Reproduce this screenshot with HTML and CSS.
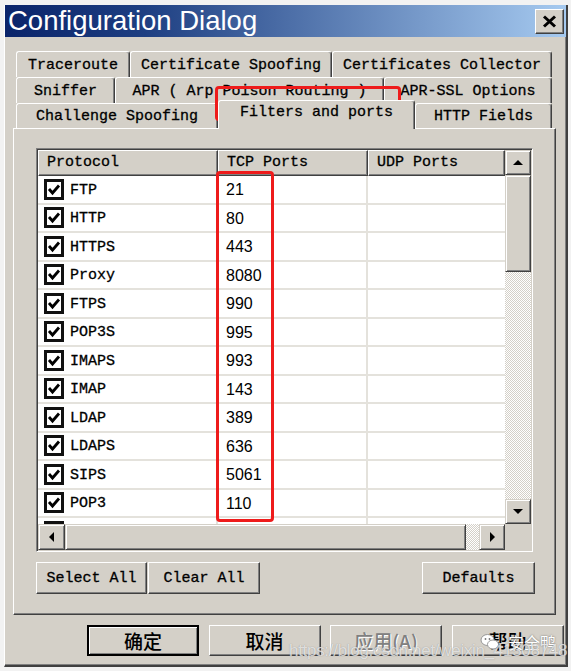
FILE: index.html
```html
<!DOCTYPE html>
<html>
<head>
<meta charset="utf-8">
<link rel="stylesheet" href="styles.css">
</head>
<body>
<div class="window">
  <div class="titlebar">
    <span class="title">Configuration Dialog</span>
    <div class="close"><svg width="15" height="13" viewBox="0 0 15 13"><path d="M2 1.5 L13 11.5 M13 1.5 L2 11.5" stroke="#000" stroke-width="3"/></svg></div>
  </div>
  <div class="content">
    <div class="tabctl">
      <div class="tabrows">
        <div class="tabrow r1">
          <div class="tab" style="width:114px">Traceroute</div>
          <div class="tab" style="width:202px">Certificate Spoofing</div>
          <div class="tab" style="width:220px">Certificates Collector</div>
        </div>
        <div class="tabrow r2">
          <div class="tab" style="width:99px">Sniffer</div>
          <div class="tab" style="width:269px">APR ( Arp Poison Routing )</div>
          <div class="tab" style="width:168px">APR-SSL Options</div>
        </div>
        <div class="tabrow r3">
          <div class="tab" style="width:202px">Challenge Spoofing</div>
          <div class="tab selected" style="width:197px">Filters and ports</div>
          <div class="tab" style="width:137px">HTTP Fields</div>
        </div>
      </div>
      <div class="panel">
        <div class="listview">
          <div class="lv-main">
            <div class="lv-head">
              <div class="hcell">Protocol</div>
              <div class="hcell">TCP Ports</div>
              <div class="hcell">UDP Ports</div>
            </div>
            <div class="lv-row"><div class="cell c1"><span class="cb"><svg width="14" height="13" viewBox="0 0 14 13"><path d="M2 6 L5.5 10 L12 2.5" fill="none" stroke="#000" stroke-width="2.8"/></svg></span>FTP</div><div class="cell c2">21</div><div class="cell c3"></div></div>
            <div class="lv-row"><div class="cell c1"><span class="cb"><svg width="14" height="13" viewBox="0 0 14 13"><path d="M2 6 L5.5 10 L12 2.5" fill="none" stroke="#000" stroke-width="2.8"/></svg></span>HTTP</div><div class="cell c2">80</div><div class="cell c3"></div></div>
            <div class="lv-row"><div class="cell c1"><span class="cb"><svg width="14" height="13" viewBox="0 0 14 13"><path d="M2 6 L5.5 10 L12 2.5" fill="none" stroke="#000" stroke-width="2.8"/></svg></span>HTTPS</div><div class="cell c2">443</div><div class="cell c3"></div></div>
            <div class="lv-row"><div class="cell c1"><span class="cb"><svg width="14" height="13" viewBox="0 0 14 13"><path d="M2 6 L5.5 10 L12 2.5" fill="none" stroke="#000" stroke-width="2.8"/></svg></span>Proxy</div><div class="cell c2">8080</div><div class="cell c3"></div></div>
            <div class="lv-row"><div class="cell c1"><span class="cb"><svg width="14" height="13" viewBox="0 0 14 13"><path d="M2 6 L5.5 10 L12 2.5" fill="none" stroke="#000" stroke-width="2.8"/></svg></span>FTPS</div><div class="cell c2">990</div><div class="cell c3"></div></div>
            <div class="lv-row"><div class="cell c1"><span class="cb"><svg width="14" height="13" viewBox="0 0 14 13"><path d="M2 6 L5.5 10 L12 2.5" fill="none" stroke="#000" stroke-width="2.8"/></svg></span>POP3S</div><div class="cell c2">995</div><div class="cell c3"></div></div>
            <div class="lv-row"><div class="cell c1"><span class="cb"><svg width="14" height="13" viewBox="0 0 14 13"><path d="M2 6 L5.5 10 L12 2.5" fill="none" stroke="#000" stroke-width="2.8"/></svg></span>IMAPS</div><div class="cell c2">993</div><div class="cell c3"></div></div>
            <div class="lv-row"><div class="cell c1"><span class="cb"><svg width="14" height="13" viewBox="0 0 14 13"><path d="M2 6 L5.5 10 L12 2.5" fill="none" stroke="#000" stroke-width="2.8"/></svg></span>IMAP</div><div class="cell c2">143</div><div class="cell c3"></div></div>
            <div class="lv-row"><div class="cell c1"><span class="cb"><svg width="14" height="13" viewBox="0 0 14 13"><path d="M2 6 L5.5 10 L12 2.5" fill="none" stroke="#000" stroke-width="2.8"/></svg></span>LDAP</div><div class="cell c2">389</div><div class="cell c3"></div></div>
            <div class="lv-row"><div class="cell c1"><span class="cb"><svg width="14" height="13" viewBox="0 0 14 13"><path d="M2 6 L5.5 10 L12 2.5" fill="none" stroke="#000" stroke-width="2.8"/></svg></span>LDAPS</div><div class="cell c2">636</div><div class="cell c3"></div></div>
            <div class="lv-row"><div class="cell c1"><span class="cb"><svg width="14" height="13" viewBox="0 0 14 13"><path d="M2 6 L5.5 10 L12 2.5" fill="none" stroke="#000" stroke-width="2.8"/></svg></span>SIPS</div><div class="cell c2">5061</div><div class="cell c3"></div></div>
            <div class="lv-row"><div class="cell c1"><span class="cb"><svg width="14" height="13" viewBox="0 0 14 13"><path d="M2 6 L5.5 10 L12 2.5" fill="none" stroke="#000" stroke-width="2.8"/></svg></span>POP3</div><div class="cell c2">110</div><div class="cell c3"></div></div>
            <div class="lv-row"><div class="cell c1"><span class="cb"><svg width="14" height="13" viewBox="0 0 14 13"><path d="M2 6 L5.5 10 L12 2.5" fill="none" stroke="#000" stroke-width="2.8"/></svg></span></div><div class="cell c2"></div><div class="cell c3"></div></div>
          </div>
          <div class="vscroll">
            <div class="sbtn"><span class="arr up"></span></div>
            <div class="thumb vthumb"></div>
            <div class="track"></div>
            <div class="sbtn"><span class="arr down"></span></div>
          </div>
          <div class="hscroll">
            <div class="sbtn hbtn-l"><span class="arr left"></span></div>
            <div class="thumb hthumb"></div>
            <div class="track"></div>
            <div class="sbtn hbtn-r"><span class="arr right"></span></div>
          </div>
          <div class="corner"></div>
        </div>
        <div class="panel-buttons">
          <div class="btn w111">Select All</div>
          <div class="btn w112 gap1">Clear All</div>
          <div class="btn w113 push">Defaults</div>
        </div>
      </div>
    </div>
    <div class="dialog-buttons">
      <div class="btn cjk default">确定</div>
      <div class="btn cjk">取消</div>
      <div class="btn cjk disabled">应用(A)</div>
      <div class="btn cjk">帮助</div>
    </div>
  </div>
</div>

<div class="annot a1"></div>
<div class="annot a2"></div>

<div class="wm-brand">
  <svg width="20" height="18" viewBox="0 0 20 18"><ellipse cx="7.5" cy="7" rx="6.5" ry="5.5" fill="#fff" stroke="#999" stroke-width="1"/><ellipse cx="13" cy="11.5" rx="5.5" ry="4.5" fill="#fff" stroke="#999" stroke-width="1"/><circle cx="5.5" cy="6" r="0.9" fill="#777"/><circle cx="9.5" cy="6" r="0.9" fill="#777"/></svg>
  <span>安全鸭</span>
</div>
<div class="wm-url">https://blog.csdn.net/weixin_41508748</div>
</body>
</html>
```
FILE: styles.css
```css
html, body {
  margin: 0;
  padding: 0;
}
body {
  background: #f2f2f2;
  width: 571px;
  height: 671px;
  overflow: hidden;
}
.window {
  margin: 5px 0 0 4px;
  width: 564px;
  height: 662px;
  box-sizing: border-box;
  background: #d4d0c8;
  border-left: 1px solid #fff;
  border-right: 2px solid #404040;
  border-bottom: 2px solid #404040;
  box-shadow: inset -1px -1px #808080;
}
.titlebar {
  height: 32px;
  display: flex;
  align-items: center;
  justify-content: space-between;
  padding: 0 2px 0 3px;
  background: linear-gradient(90deg, #0a246a 0%, #1e3f82 25%, #a6caf0 100%);
}
.title {
  color: #fff;
  font-family: "Liberation Sans", Arial, sans-serif;
  font-size: 27.5px;
  line-height: 32px;
  white-space: nowrap;
}
.close {
  width: 29px;
  height: 25px;
  box-sizing: border-box;
  background: #d4d0c8;
  border: 1px solid;
  border-color: #fff #404040 #404040 #fff;
  box-shadow: inset -1px -1px #808080;
  display: flex;
  align-items: center;
  justify-content: center;
}
.content {
  padding: 14px 0 0 8px;
}
.tabctl {
  width: 543px;
}
.tabrows {
  padding-left: 3px;
}
.tabrow {
  display: flex;
}
.tabrow.r1, .tabrow.r2 { height: 26px; }
.tabrow.r3 { height: 25px; }
.tab {
  box-sizing: border-box;
  height: 100%;
  border-top: 1px solid #fff;
  border-left: 1px solid #fff;
  border-right: 1px solid #404040;
  box-shadow: inset -1px 0 #808080;
  border-radius: 3px 3px 0 0;
  display: flex;
  align-items: center;
  justify-content: center;
  font-family: "Liberation Mono", "Courier New", monospace;
  font-size: 15px;
  -webkit-text-stroke: 0.3px #000;
  color: #000;
  white-space: nowrap;
  padding-top: 1px;
}
.tab.selected {
  position: relative;
  z-index: 2;
  height: auto;
  margin-top: -3px;
  margin-bottom: -1px;
  background: #d4d0c8;
  padding-bottom: 6px;
}
.panel {
  position: relative;
  height: 487px;
  box-sizing: border-box;
  border-top: 1px solid #fff;
  border-left: 1px solid #fff;
  border-right: 1px solid #404040;
  border-bottom: 1px solid #404040;
  box-shadow: inset -1px -1px #808080;
  padding: 19px 0 0 22px;
}
.listview {
  width: 497px;
  height: 404px;
  box-sizing: border-box;
  border: 1px solid;
  border-color: #808080 #fff #fff #808080;
  box-shadow: inset 1px 1px #404040, inset -1px -1px #d4d0c8;
  padding: 1px;
  display: grid;
  grid-template-columns: 467px 26px;
  grid-template-rows: 374px 26px;
  background: #fff;
}
.lv-main {
  overflow: hidden;
  background: #fff;
}
.lv-head {
  display: grid;
  grid-template-columns: 180px 150px 137px;
  height: 26px;
}
.hcell {
  box-sizing: border-box;
  background: #d4d0c8;
  border-top: 1px solid #fff;
  border-left: 1px solid #fff;
  border-right: 1px solid #404040;
  border-bottom: 1px solid #404040;
  box-shadow: inset -1px -1px #808080;
  font-family: "Liberation Mono", "Courier New", monospace;
  font-size: 15px;
  -webkit-text-stroke: 0.3px #000;
  line-height: 24px;
  padding-left: 8px;
  white-space: nowrap;
}
.lv-row {
  display: grid;
  grid-template-columns: 180px 150px 137px;
  height: 28.5px;
  box-sizing: border-box;
  border-bottom: 2px solid #e4e2dc;
}
.cell {
  box-sizing: border-box;
  border-right: 2px solid #e4e2dc;
  display: flex;
  align-items: center;
  white-space: nowrap;
  padding-top: 2px;
}
.c1 {
  padding-left: 6px;
  font-family: "Liberation Mono", "Courier New", monospace;
  font-size: 15px;
  -webkit-text-stroke: 0.3px #000;
}
.c2 {
  padding-left: 8px;
  font-family: "Liberation Sans", Arial, sans-serif;
  font-size: 16px;
}
.c3 { border-right: none; }
.cb {
  width: 20px;
  height: 21px;
  box-sizing: border-box;
  border: 3px solid #111;
  background: #fff;
  margin-right: 6px;
  margin-top: -2px;
  display: flex;
  align-items: center;
  justify-content: center;
}
.vscroll {
  display: flex;
  flex-direction: column;
}
.hscroll {
  display: flex;
}
.sbtn, .thumb {
  box-sizing: border-box;
  background: #d4d0c8;
  border: 1px solid;
  border-color: #d4d0c8 #404040 #404040 #d4d0c8;
  box-shadow: inset 1px 1px #fff, inset -1px -1px #808080;
  display: flex;
  align-items: center;
  justify-content: center;
}
.vscroll .sbtn { height: 25px; }
.vthumb { height: 97px; }
.hbtn-l { width: 27px; }
.hthumb { width: 401px; }
.hbtn-r { width: 26px; }
.track {
  flex: 1;
  background: repeating-conic-gradient(#d4d0c8 0 25%, #fff 0 50%) 0 0 / 2px 2px;
}
.corner {
  background: #d4d0c8;
}
.arr {
  width: 0;
  height: 0;
}
.arr.up {
  border-left: 5px solid transparent;
  border-right: 5px solid transparent;
  border-bottom: 5px solid #000;
}
.arr.down {
  border-left: 5px solid transparent;
  border-right: 5px solid transparent;
  border-top: 5px solid #000;
}
.arr.left {
  border-top: 5px solid transparent;
  border-bottom: 5px solid transparent;
  border-right: 5px solid #000;
}
.arr.right {
  border-top: 5px solid transparent;
  border-bottom: 5px solid transparent;
  border-left: 5px solid #000;
}
.panel-buttons {
  display: flex;
  margin-top: 10px;
}
.btn {
  box-sizing: border-box;
  height: 32px;
  background: #d4d0c8;
  border: 1px solid;
  border-color: #fff #404040 #404040 #fff;
  box-shadow: inset -1px -1px #808080;
  display: flex;
  align-items: center;
  justify-content: center;
  font-family: "Liberation Mono", "Courier New", monospace;
  font-size: 15px;
  -webkit-text-stroke: 0.3px #000;
  white-space: nowrap;
}
.w111 { width: 111px; }
.w112 { width: 112px; }
.w113 { width: 113px; }
.gap1 { margin-left: 1px; }
.push { margin-left: 162px; }
.dialog-buttons {
  display: flex;
  gap: 9.5px;
  margin-top: 10px;
  padding-left: 74px;
}
.btn.cjk {
  width: 112px;
  height: 31px;
  font-family: "Noto Sans CJK SC", sans-serif;
  font-size: 19px;
  font-weight: 500;
  -webkit-text-stroke: 0;
}
.btn.default {
  border: 2px solid #000;
  box-shadow: inset 1px 1px #fff, inset -1px -1px #808080;
}
.btn.disabled {
  color: #808080;
  text-shadow: 1px 1px #fff;
}
.annot {
  position: absolute;
  box-sizing: border-box;
  border: 3px solid #ee1b1b;
  border-radius: 4px;
}
.a1 { left: 215px; top: 86px; width: 186px; height: 35px; }
.a2 { left: 216px; top: 171px; width: 58px; height: 351px; }
.wm-brand {
  position: absolute;
  left: 480px;
  top: 630px;
  display: flex;
  align-items: center;
  gap: 8px;
  font-family: "Noto Sans CJK SC", sans-serif;
  font-size: 16px;
  color: #fff;
  text-shadow: 0 0 2px #666;
}
.wm-url {
  position: absolute;
  left: 289px;
  top: 641px;
  font-family: "Liberation Sans", Arial, sans-serif;
  font-size: 17px;
  letter-spacing: -0.3px;
  color: rgba(255, 255, 255, 0.7);
  text-shadow: 0 0 1px rgba(110, 110, 110, 0.7);
  white-space: nowrap;
}
```
